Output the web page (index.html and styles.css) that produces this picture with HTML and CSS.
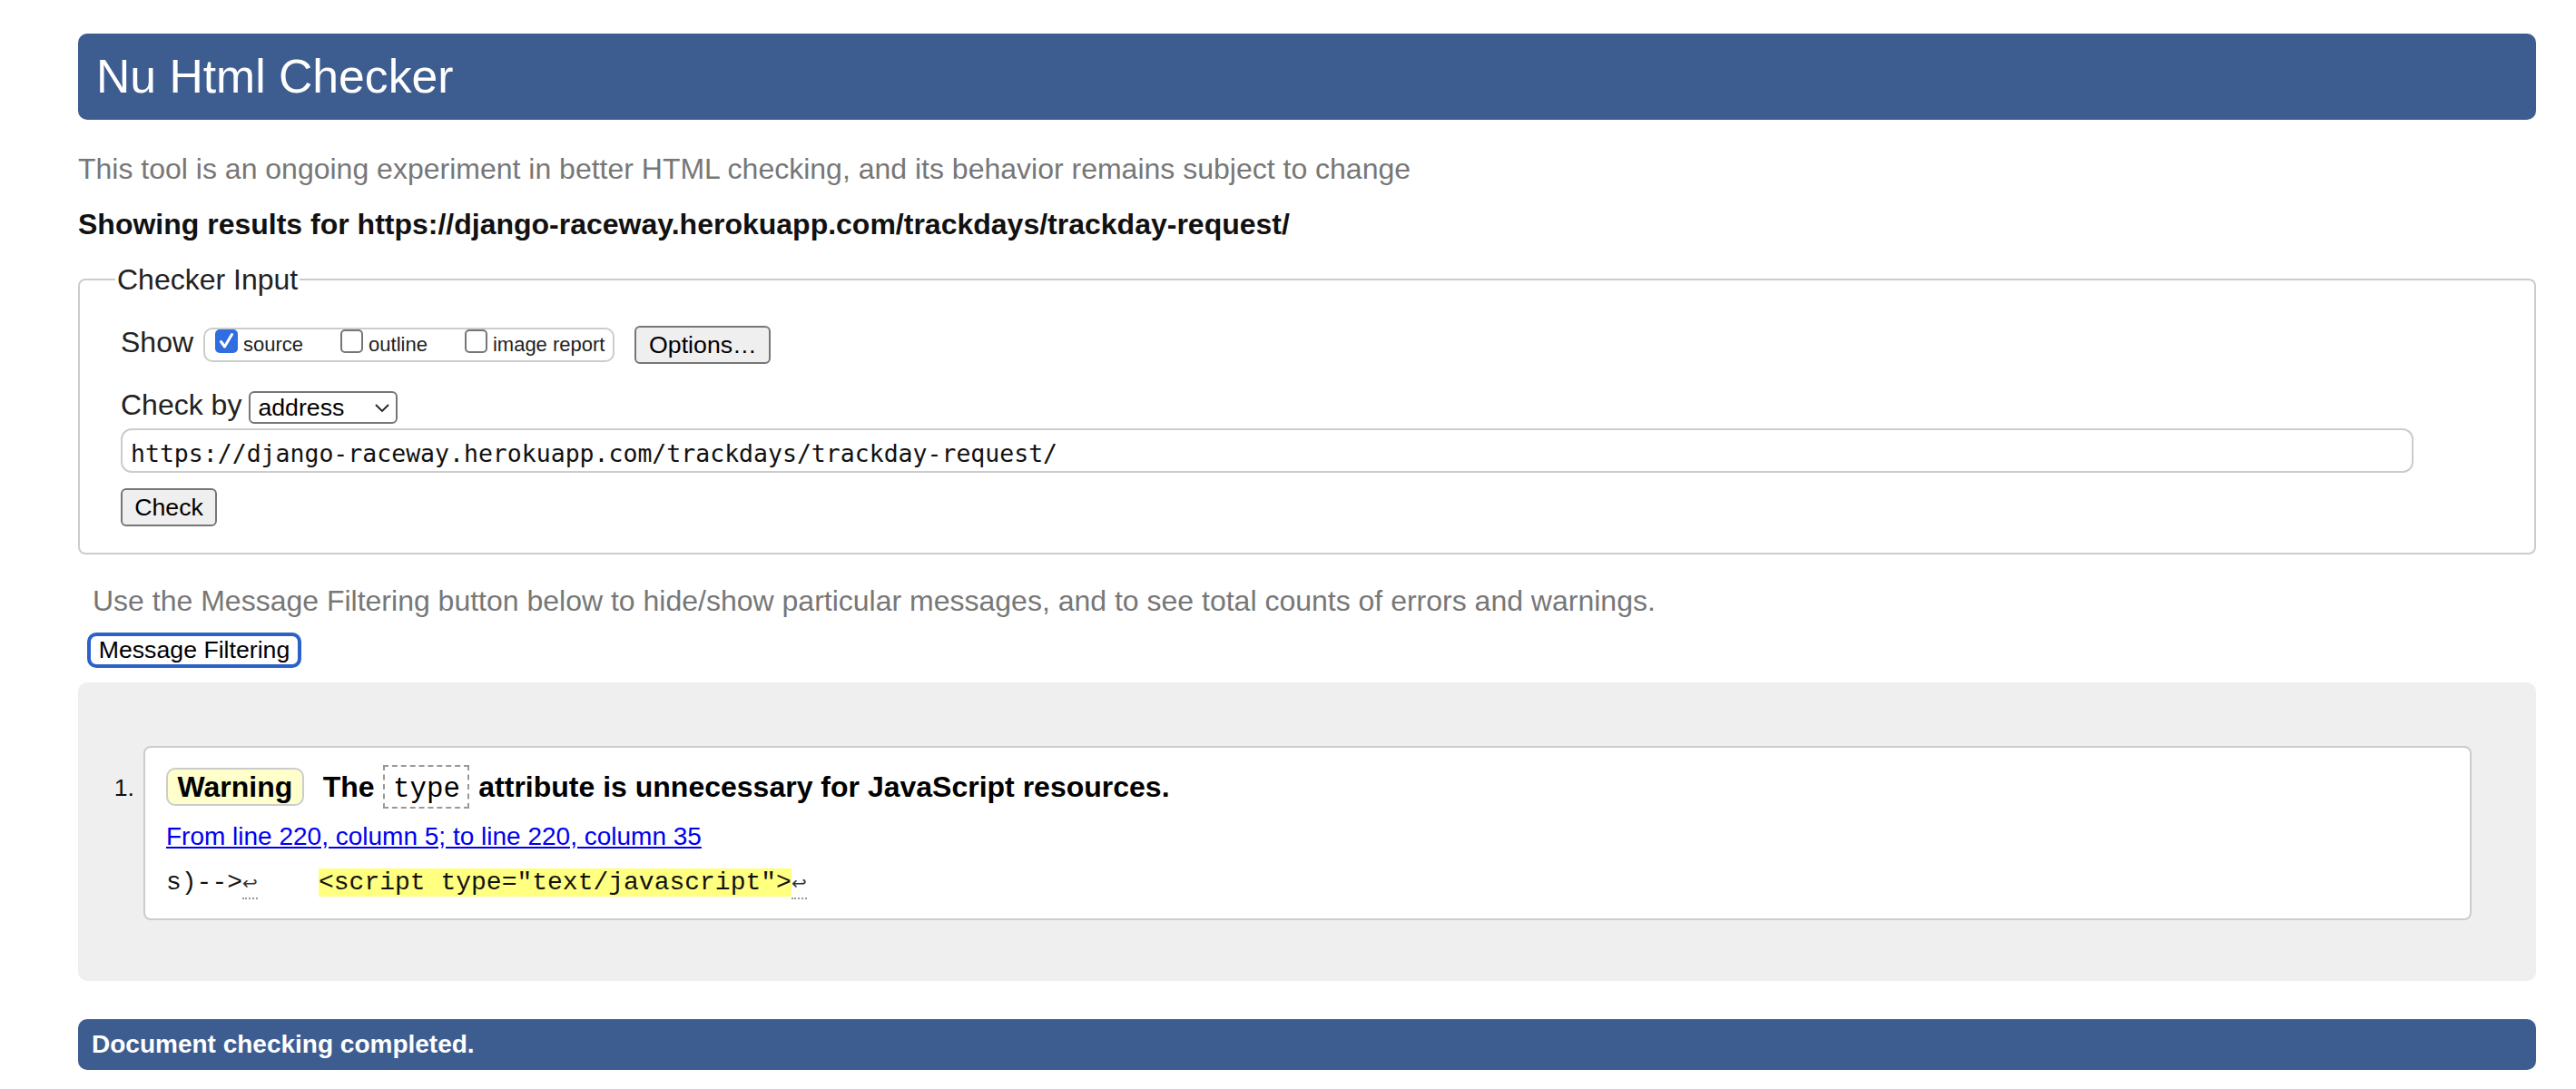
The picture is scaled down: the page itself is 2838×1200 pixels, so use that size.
FILE: index.html
```html
<!DOCTYPE html>
<html lang="en">
<head>
<meta charset="utf-8">
<title>Nu Html Checker</title>
<link rel="stylesheet" href="styles.css">
</head>
<body>
<div class="page">
  <h1 class="banner">Nu Html Checker</h1>
  <p class="intro">This tool is an ongoing experiment in better HTML checking, and its behavior remains subject to change</p>
  <p class="showing">Showing results for https://django-raceway.herokuapp.com/trackdays/trackday-request/</p>
  <fieldset class="checker">
    <legend>Checker Input</legend>
    <div class="show-row">
      <span class="lbl">Show</span>
      <div class="opts">
        <label class="opt"><span class="cb on"><svg viewBox="0 0 21 22" width="21" height="22"><path d="M4.5 11.5 L8.5 17 L16.5 3.5" fill="none" stroke="#fff" stroke-width="3" stroke-linecap="round" stroke-linejoin="round"/></svg></span><span class="opt-text">source</span></label>
        <label class="opt"><span class="cb"></span><span class="opt-text">outline</span></label>
        <label class="opt"><span class="cb"></span><span class="opt-text">image report</span></label>
      </div>
      <button class="btn options">Options…</button>
    </div>
    <div class="by-row">
      <span class="lbl lbl-by">Check by</span>
      <div class="select"><span>address</span><svg viewBox="0 0 16 9" width="16" height="9"><polyline points="1,1 8,8 15,1" fill="none" stroke="#222" stroke-width="1.8"/></svg></div>
    </div>
    <div class="url">https://django-raceway.herokuapp.com/trackdays/trackday-request/</div>
    <button class="btn check">Check</button>
  </fieldset>
  <p class="filter-note">Use the Message Filtering button below to hide/show particular messages, and to see total counts of errors and warnings.</p>
  <button class="filter-btn">Message Filtering</button>
  <div class="results">
    <div class="msg-row">
      <span class="num">1.</span>
      <div class="card">
        <p class="msg-title"><span class="badge">Warning</span> The <code class="attr">type</code> attribute is unnecessary for JavaScript resources.</p>
        <p class="loc"><a href="#">From line 220, column 5; to line 220, column 35</a></p>
        <p class="extract"><code>s)--&gt;<b class="lf">↩</b>    <mark>&lt;script type="text/javascript"&gt;</mark><b class="lf">↩</b></code></p>
      </div>
    </div>
  </div>
  <div class="done">Document checking completed.</div>
</div>
</body>
</html>
```
FILE: styles.css
```css
* { box-sizing: border-box; }
html, body { margin: 0; background: #fff; }
body { font-family: "Liberation Sans", Arial, sans-serif; color: #111; }

.page { padding: 37px 44px 0 86px; }

.banner {
  margin: 0;
  height: 95px;
  line-height: 95px;
  background: #3d5d91;
  color: #fff;
  font-size: 51.7px;
  font-weight: normal;
  padding-left: 20px;
  border-radius: 10px;
}

.intro { margin: 35px 0 0; font-size: 32px; line-height: 38px; color: #777; }
.showing { margin: 23px 0 0; font-size: 32px; line-height: 38px; font-weight: bold; color: #111; }

.checker {
  margin: 23px 0 0;
  border: 2px solid #ccc;
  border-radius: 8px;
  padding: 32px 0 29px 45px;
  min-width: 0;
}
.checker legend { font-size: 32px; line-height: 38px; padding: 0 2px; margin-left: -6px; color: #222; }

.show-row { display: flex; align-items: flex-start; height: 42px; }
.lbl { font-size: 32px; line-height: 36px; color: #222; }
.lbl-by { line-height: 30px; }

.opts {
  display: flex;
  margin: 2px 0 0 11px;
  height: 38px;
  border: 2px solid #ccc;
  border-radius: 10px;
  padding: 0 9px 0 11px;
  gap: 41px;
}
.opt { display: flex; height: 34px; gap: 6px; color: #222; }
.cb {
  width: 25px;
  height: 26px;
  border: 2px solid #767676;
  border-radius: 5px;
  background: #fff;
  display: flex;
  align-items: center;
  justify-content: center;
}
.cb.on { background: #2f6de1; border-color: #2f6de1; }
.opt-text { font-size: 22px; line-height: 34px; }

.btn {
  font-family: "Liberation Sans", Arial, sans-serif;
  font-size: 26.7px;
  background: #efefef;
  border: 2px solid #767676;
  border-radius: 6px;
  color: #000;
  padding: 0;
}
.options { width: 150px; height: 42px; margin-left: 22px; }

.by-row { display: flex; align-items: flex-start; margin-top: 30px; height: 36px; }
.select {
  margin-left: 8px;
  width: 164px;
  height: 36px;
  border: 2px solid #767676;
  border-radius: 6px;
  display: flex;
  align-items: center;
  justify-content: space-between;
  padding: 0 7px 0 8px;
  font-size: 26.7px;
  background: #fff;
  color: #000;
}

.url {
  margin-top: 5px;
  width: 2526px;
  height: 49px;
  border: 2px solid #ccc;
  border-radius: 12px;
  padding: 4px 9px 0;
  font-family: "DejaVu Sans Mono", monospace;
  font-size: 26.5px;
  line-height: 43px;
  color: #111;
}

.check { display: block; margin-top: 17px; width: 106px; height: 42px; }

.filter-note { margin: 32px 0 0 16px; font-size: 32px; line-height: 38px; color: #777; }

.filter-btn {
  display: block;
  margin: 16px 0 0 10px;
  width: 236px;
  height: 39px;
  border: 4px solid #2b62c8;
  border-radius: 10px;
  background: #fff;
  color: #000;
  font-family: "Liberation Sans", Arial, sans-serif;
  font-size: 26.7px;
  padding: 0;
}

.results {
  margin-top: 16px;
  background: #efefef;
  border-radius: 10px;
  padding: 70px 71px 67px 0;
}
.msg-row { display: flex; align-items: flex-start; }
.num {
  width: 72px;
  flex: none;
  text-align: right;
  padding: 27px 10px 0 0;
  font-size: 26.7px;
  line-height: 38px;
  color: #111;
}
.card {
  flex: 1;
  background: #fff;
  border: 2px solid #ccc;
  border-radius: 8px;
  padding: 19px 20px 19px 23px;
}
.msg-title { margin: 0; font-size: 32px; line-height: 38px; font-weight: bold; color: #000; }
.badge {
  display: inline-block;
  background: #ffffcc;
  border: 2px solid #ccc;
  border-radius: 10px;
  padding: 0 10.5px;
  margin-right: 12px;
  line-height: 38px;
}
.attr {
  display: inline-block;
  font-family: "Liberation Mono", "Courier New", monospace;
  font-weight: normal;
  font-size: 30.8px;
  line-height: 38px;
  padding: 6px 8.5px 0;
  border: 2px dashed #999;
  margin: 0 1px;
}

.loc { margin: 14px 0 0; font-size: 28px; line-height: 34px; }
.loc a { color: #0000ee; }

.extract {
  margin: 14px 0 0;
  font-family: "Liberation Mono", "Courier New", monospace;
  font-size: 28px;
  line-height: 40px;
  white-space: pre;
  color: #111;
}
.extract code { font-family: inherit; }
.extract mark { background: #ffff80; color: #111; }
.lf {
  font-weight: normal;
  font-family: "DejaVu Sans", sans-serif;
  font-size: 20px;
  padding-bottom: 4px;
  border-bottom: 2px dotted #999;
  color: #333;
}

.done {
  margin-top: 42px;
  height: 56px;
  line-height: 56px;
  background: #3d5d91;
  color: #fff;
  font-weight: bold;
  font-size: 28px;
  padding-left: 15px;
  border-radius: 10px;
}
```
